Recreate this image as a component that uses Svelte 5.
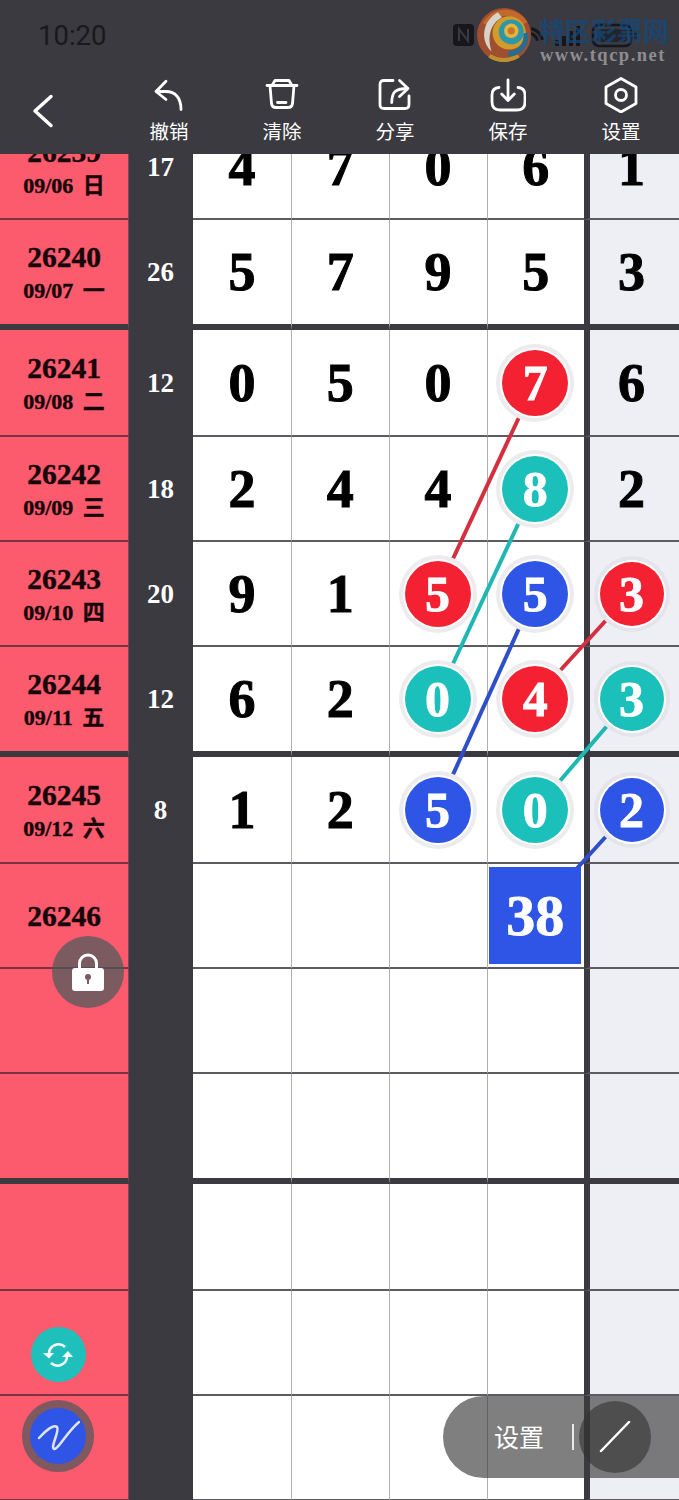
<script>
	const R = 'red', T = 'teal', B = 'blue';

	// digit cells: plain number, or [number, colour] for a marked ball
	const rows = [
		{ id: '26239', date: '09/06 日', sum: 17, cells: [4, 7, 0, 6, 1] },
		{ id: '26240', date: '09/07 一', sum: 26, cells: [5, 7, 9, 5, 3], end: true },
		{ id: '26241', date: '09/08 二', sum: 12, cells: [0, 5, 0, [7, R], 6], first: true },
		{ id: '26242', date: '09/09 三', sum: 18, cells: [2, 4, 4, [8, T], 2] },
		{ id: '26243', date: '09/10 四', sum: 20, cells: [9, 1, [5, R], [5, B], [3, R]] },
		{ id: '26244', date: '09/11 五', sum: 12, cells: [6, 2, [0, T], [4, R], [3, T]], end: true },
		{ id: '26245', date: '09/12 六', sum: 8, cells: [1, 2, [5, B], [0, T], [2, B]], first: true },
		{ id: '26246', cells: ['', '', '', { box: 38 }, ''] },
		{ cells: ['', '', '', '', ''] },
		{ cells: ['', '', '', '', ''], end: true },
		{ cells: ['', '', '', '', ''], first: true },
		{ cells: ['', '', '', '', ''] },
		{ cells: ['', '', '', '', ''] }
	];

	const links = [
		{ c: R, x1: 535, y1: 383, x2: 437, y2: 593 },
		{ c: T, x1: 535, y1: 488, x2: 437, y2: 698 },
		{ c: B, x1: 535, y1: 593, x2: 437, y2: 810 },
		{ c: R, x1: 631, y1: 593, x2: 535, y2: 698 },
		{ c: T, x1: 631, y1: 698, x2: 535, y2: 810 },
		{ c: B, x1: 631, y1: 809, x2: 570, y2: 876 }
	];
</script>

<div class="screen">
	<header>
		<div class="status">
			<span class="time">10:20</span>
			<svg class="status-icons" width="190" height="30" viewBox="0 0 190 30">
				<rect x="3" y="4" width="21" height="22" rx="4" fill="#17171b" />
				<path d="M9 21V9l9 12V9" fill="none" stroke="#3a3a40" stroke-width="2" />
				<path d="M76 13a16 16 0 0 1 16 0M79 17a10 10 0 0 1 10 0" transform="rotate(45 84 17)" fill="none" stroke="#17171b" stroke-width="3" />
				<rect x="105" y="20" width="4" height="6" fill="#17171b" />
				<rect x="112" y="16" width="4" height="10" fill="#17171b" />
				<rect x="119" y="11" width="4" height="15" fill="#17171b" />
				<rect x="126" y="6" width="4" height="20" fill="#17171b" />
				<rect x="143" y="5" width="38" height="21" rx="6" fill="none" stroke="#17171b" stroke-width="2.5" />
				<rect x="147" y="9" width="30" height="13" rx="3" fill="#17171b" opacity="0.6" />
				<rect x="184" y="11" width="3" height="9" rx="1" fill="#17171b" />
			</svg>
		</div>
		<nav class="toolbar">
			<button class="back" aria-label="返回">
				<svg width="24" height="36" viewBox="0 0 24 36"><path d="M20 3.5 4 18l16 14.5" /></svg>
			</button>
			<button>
				<svg width="36" height="36" viewBox="0 0 36 36"><path d="M15 4.2 5 14.5l10 8M5 14.5h10c9 0 15 6 15 18" /></svg>
				<span>撤销</span>
			</button>
			<button>
				<svg width="36" height="36" viewBox="0 0 36 36"><path d="M3 8.5h30M8 8.5l3-5h14l3 5M6 8.5l1.5 18q.5 4 4.5 4h12q4 0 4.5-4l1.5-18M13.5 25.5H22" /></svg>
				<span>清除</span>
			</button>
			<button>
				<svg width="36" height="36" viewBox="0 0 36 36"><path d="M16 3.5H7q-4 0-4 4v20q0 4 4 4h21q4 0 4-4V19M14.7 25.5C15 15 18 11.5 31 11.5M22.5 3.5l8.5 8-8.5 8" /></svg>
				<span>分享</span>
			</button>
			<button>
				<svg width="36" height="36" viewBox="0 0 36 36"><path d="M9 10.5Q2 11 2 18v7q0 8 8 8h17q8 0 8-8v-7q0-7-7-7.500M18 3v20.500M11.700 17l6.300 6.500 6.300-6.500" /></svg>
				<span>保存</span>
			</button>
			<button>
				<svg width="36" height="36" viewBox="0 0 36 36"><path d="M18 1.500 33 10v16.500L18 35 3 26.500V10z" /><circle cx="18" cy="18" r="5.500" /></svg>
				<span>设置</span>
			</button>
		</nav>
	</header>

	<div class="watermark">
		<svg class="logo" width="54" height="54" viewBox="0 0 52 52">
			<circle cx="26" cy="26" r="26" fill="#a9502f" />
			<path d="M8 16A22 22 0 0 1 46 15" fill="none" stroke="#cf6e2a" stroke-width="6" />
			<path d="M12 46a26 26 0 0 0 28 0" fill="none" stroke="#c79a2e" stroke-width="4" />
			<circle cx="31" cy="24" r="16" fill="#dfa52a" />
			<path d="M20 4C6 12 2 30 14 42 10 28 12 16 24 9z" fill="#e6e0d4" />
			<path d="M47 24A17 17 0 0 1 30 44" fill="none" stroke="#27719a" stroke-width="5" />
			<circle cx="33" cy="23" r="12" fill="#2b9fb4" />
			<circle cx="33" cy="22" r="7" fill="#ecc23c" />
			<circle cx="33" cy="22" r="3.500" fill="#d9772a" />
		</svg>
		<span class="wm-name">特区彩票网</span>
		<span class="wm-url">www.tqcp.net</span>
	</div>

	<main>
		<div class="board">
			{#each rows as row}
				<div class="row" class:first={row.first} class:end={row.end}>
					<div class="period" class:dated={row.date}>
						{#if row.id}<b>{row.id}</b>{/if}
						{#if row.date}<small>{row.date}</small>{/if}
					</div>
					<div class="sum">{row.sum ?? ''}</div>
					{#each row.cells as cell, i}
						<div class="cell" class:last={i === 4}>
							{#if Array.isArray(cell)}
								<span class="ball {cell[1]}" class:small={i === 4}>{cell[0]}</span>
							{:else if cell && cell.box}
								<span class="total">{cell.box}</span>
							{:else}
								{cell}
							{/if}
						</div>
					{/each}
				</div>
			{/each}
			<svg class="links" width="679" height="1500" viewBox="0 115 679 1500">
				{#each links as l}
					<line class={l.c} x1={l.x1} y1={l.y1} x2={l.x2} y2={l.y2} />
				{/each}
			</svg>
		</div>
	</main>

	<button class="fab lock" aria-label="锁定">
		<svg width="36" height="40" viewBox="0 0 36 40">
			<path d="M9.500 18v-6.500a8.500 8.500 0 0 1 17 0V18" fill="none" stroke="#fff" stroke-width="3" />
			<rect x="2" y="16" width="32" height="23" rx="3" fill="#fff" />
			<circle cx="18" cy="25" r="3" fill="#7b5a60" />
			<rect x="17" y="26" width="2" height="6" fill="#7b5a60" />
		</svg>
	</button>
	<button class="fab sync" aria-label="刷新">
		<svg width="32" height="26" viewBox="0 0 32 26">
			<path d="M7 11a9.500 9.500 0 0 1 16-6M25 15a9.500 9.500 0 0 1-16 6" fill="none" stroke="#fff" stroke-width="2.500" />
			<path d="M1 11h11l-5 5.500zM20 15h11l-5-6z" fill="#fff" />
		</svg>
	</button>
	<button class="fab pen" aria-label="画笔">
		<svg width="44" height="36" viewBox="0 0 44 36">
			<path d="M3 20C10 12 18 6 21 9c3 4-7 20-3 22 4 1 12-16 25-27" fill="none" stroke="#dfe4f5" stroke-width="2.500" stroke-linecap="round" />
		</svg>
	</button>

	<div class="pill">
		<span class="pill-label">设置</span>
		<i class="pill-sep"></i>
		<button class="pill-btn" aria-label="划线">
			<svg width="32" height="32" viewBox="0 0 32 32"><path d="M2 30 30 1" stroke="#fff" stroke-width="2.500" stroke-linecap="round" /></svg>
		</button>
	</div>
</div>

<style>
	:global(body) {
		margin: 0;
		background: #fff;
	}

	.screen {
		position: relative;
		width: 679px;
		height: 1500px;
		overflow: hidden;
		display: flex;
		flex-direction: column;
		font-family: 'Liberation Serif', 'Noto Sans CJK SC', serif;
	}

	button {
		border: 0;
		padding: 0;
		background: none;
		color: inherit;
		font: inherit;
	}

	header {
		position: relative;
		z-index: 5;
		flex: none;
		height: 154px;
		background: #3a3a40;
		color: #fff;
	}

	.status {
		display: flex;
		align-items: center;
		justify-content: space-between;
		height: 70px;
		padding: 0 39px 0 38px;
		box-sizing: border-box;
	}

	.time {
		font: 27.500px Roboto, sans-serif;
		color: #19191d;
	}

	.toolbar {
		display: flex;
		padding-left: 112.5px;
		position: relative;
	}

	.toolbar button {
		width: 113px;
		display: flex;
		flex-direction: column;
		align-items: center;
		font-family: 'Noto Sans CJK SC', sans-serif;
		font-size: 19.5px;
		line-height: 28px;
		margin-top: 6.5px;
	}

	.toolbar span {
		margin-top: 4px;
	}

	.toolbar svg {
		fill: none;
		stroke: #fff;
		stroke-width: 2.8;
		stroke-linecap: round;
		stroke-linejoin: round;
	}

	.toolbar .back {
		position: absolute;
		left: 31px;
		top: 23px;
		width: 24px;
		margin: 0;
	}

	.toolbar .back svg {
		stroke-width: 3.5;
	}

	.watermark {
		position: absolute;
		z-index: 6;
		left: 477px;
		top: 8px;
		width: 197px;
		height: 60px;
	}

	.logo {
		position: absolute;
		left: 0;
		top: 0;
		opacity: 0.92;
	}

	.wm-name {
		position: absolute;
		left: 62px;
		top: 6px;
		font: bold 26px/32px 'Noto Sans CJK SC', sans-serif;
		color: #104a80;
		opacity: 0.7;
		white-space: nowrap;
	}

	.wm-url {
		position: absolute;
		left: 63px;
		top: 36px;
		font: bold 18.500px/22px 'Liberation Serif', serif;
		letter-spacing: 1.500px;
		color: #8d8d90;
		white-space: nowrap;
	}

	main {
		flex: 1;
		min-height: 0;
		overflow: hidden;
	}

	.board {
		position: relative;
		margin-top: -39px;
	}

	.links {
		position: absolute;
		left: 0;
		top: 0;
		z-index: 1;
		pointer-events: none;
	}

	.links line {
		stroke-width: 4;
	}

	.links .red {
		stroke: #d42f3f;
	}

	.links .teal {
		stroke: #1fb7b2;
	}

	.links .blue {
		stroke: #2f4fc9;
	}

	.row {
		display: grid;
		grid-template-columns: 129px 64px 99px 97.500px 98px 96.500px 95px;
		height: 105px;
	}

	.row.first {
		height: 107px;
	}

	.row.end {
		height: 110px;
	}

	.row:last-child {
		height: 120px;
	}

	.period {
		display: flex;
		flex-direction: column;
		align-items: center;
		justify-content: center;
		box-sizing: border-box;
		background: #fc5b6e;
		border-right: 1px solid #7a4a55;
		border-bottom: 2px solid #7c3242;
		color: #16060a;
		-webkit-text-stroke: 0.4px #16060a;
	}

	.period.dated {
		padding-top: 4px;
	}

	.period b {
		font-size: 29.500px;
		line-height: 34px;
	}

	.period small {
		font-size: 22px;
		font-weight: bold;
		line-height: 34px;
		word-spacing: 4px;
	}

	.sum {
		display: flex;
		align-items: center;
		justify-content: center;
		padding-right: 1px;
		background: #3a3a40;
		color: #fff;
		font-size: 27px;
		font-weight: bold;
	}

	.end .sum {
		padding-bottom: 6px;
	}

	.cell {
		display: flex;
		align-items: center;
		justify-content: center;
		box-sizing: border-box;
		background: #fff;
		border-right: 1px solid #b0b0b0;
		border-bottom: 2px solid #5c5c60;
		color: #000;
		font-size: 54px;
		font-weight: bold;
		-webkit-text-stroke: 1px #000;
	}

	.first .cell {
		padding-top: 1px;
	}

	.cell:nth-child(6) {
		border-right: 0;
	}

	.cell.last {
		background: #eeeef5;
		border-right: 0;
		border-left: 6px solid #3a3a40;
		padding-right: 6px;
	}

	.end .period,
	.end .cell {
		border-bottom: 6px solid #3a3a40;
	}

	.ball {
		position: relative;
		z-index: 2;
		flex: none;
		display: flex;
		align-items: center;
		justify-content: center;
		width: 66px;
		height: 66px;
		margin-left: -1px;
		border-radius: 50%;
		color: #fff;
		font-size: 50px;
		-webkit-text-stroke: 0.8px #fff;
		box-shadow: 0 0 0 2px #fff, 0 0 0 6px #ececef;
	}

	.ball.small {
		width: 64px;
		height: 64px;
		margin-left: 0;
		box-shadow: 0 0 0 2px #fff, 0 0 0 6px #e4e4ea;
	}

	.ball.red {
		background: #f32131;
	}

	.ball.teal {
		background: #1bc0bb;
	}

	.ball.blue {
		background: #2e55e6;
	}

	.total {
		position: relative;
		z-index: 2;
		flex: none;
		display: flex;
		align-items: center;
		justify-content: center;
		width: 92px;
		height: 97px;
		margin-left: -1px;
		background: #2e55e6;
		color: #fff;
		font-size: 58px;
		-webkit-text-stroke: 0.8px #fff;
	}

	.fab {
		position: absolute;
		z-index: 4;
		display: flex;
		align-items: center;
		justify-content: center;
		border-radius: 50%;
		box-sizing: border-box;
	}

	.lock {
		left: 52px;
		top: 936px;
		width: 72px;
		height: 72px;
		background: rgba(68, 90, 90, 0.7);
	}

	.sync {
		left: 30.500px;
		top: 1327px;
		width: 55px;
		height: 55px;
		background: #1fc0bb;
	}

	.pen {
		left: 22px;
		top: 1400px;
		width: 72px;
		height: 72px;
		background: #2e55e6;
		border: 8.500px solid #7f5860;
	}

	.pill {
		position: absolute;
		z-index: 4;
		left: 443px;
		top: 1396px;
		right: 0;
		height: 82px;
		display: flex;
		align-items: center;
		border-radius: 41px 0 0 41px;
		background: rgba(60, 60, 60, 0.66);
		color: #fff;
	}

	.pill-label {
		margin-left: 51px;
		font: 25px/30px 'Noto Sans CJK SC', sans-serif;
		margin-top: -3px;
	}

	.pill-sep {
		width: 2px;
		height: 26px;
		margin-left: 28px;
		background: #e8e8e8;
	}

	.pill-btn {
		width: 72px;
		height: 72px;
		margin-left: 4.500px;
		border-radius: 50%;
		background: rgba(50, 50, 50, 0.6);
		display: flex;
		align-items: center;
		justify-content: center;
	}
</style>
